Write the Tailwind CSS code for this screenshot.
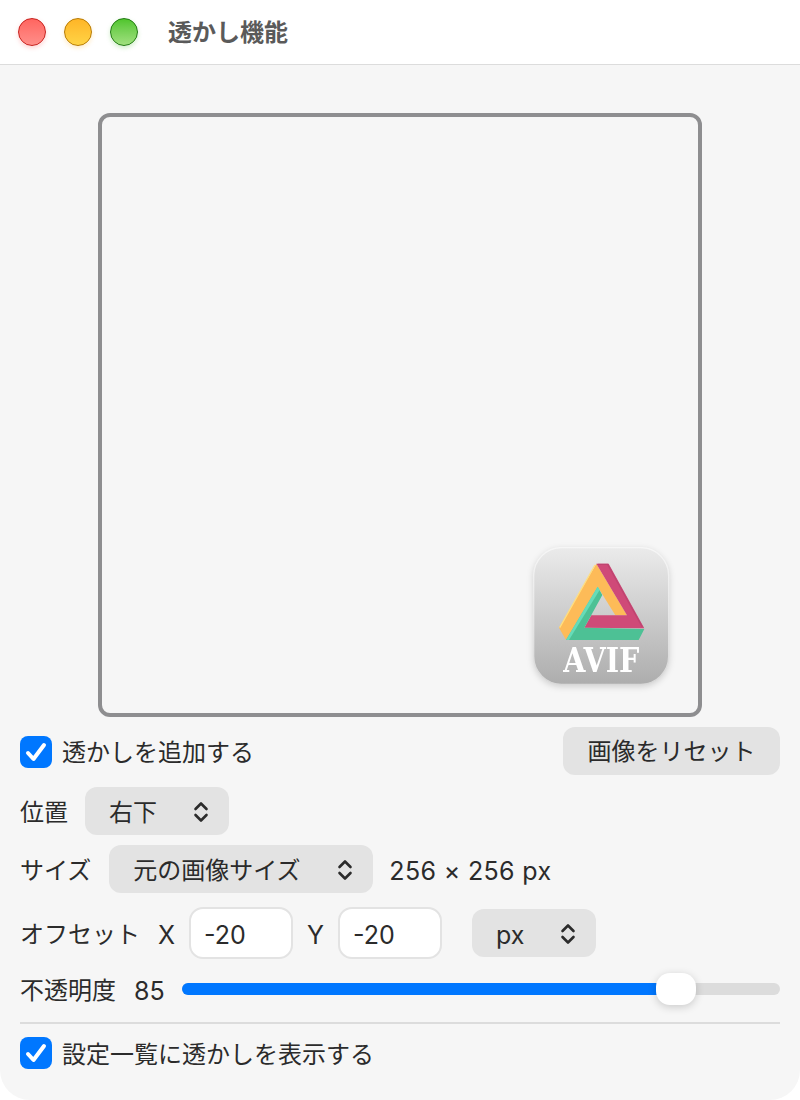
<!DOCTYPE html>
<html lang="ja">

<head>
  <meta charset="utf-8">
  <title>透かし機能</title>
  <script src="https://cdn.jsdelivr.net/npm/@tailwindcss/browser@4"></script>
</head>

<body class="bg-white font-['Inter','Noto_Sans_CJK_JP',sans-serif] text-[24px] leading-[32px] text-[#2b2b2b]">
  <div class="w-[800px] h-[1100px] flex flex-col bg-[#f6f6f6] rounded-b-[30px] overflow-hidden">

    <!-- title bar -->
    <div class="h-[65px] shrink-0 flex items-center pl-[18px] bg-white border-b border-[#dcdcdc]">
      <span class="w-[28px] h-[28px] rounded-full border border-[#c8201c] bg-gradient-to-b from-[#ff6560] to-[#ff8e8a] shadow-[0_2px_4px_rgba(255,90,90,0.25)]"></span>
      <span class="w-[28px] h-[28px] ml-[18px] rounded-full border border-[#b87a00] bg-gradient-to-b from-[#ffb526] to-[#ffd445] shadow-[0_2px_4px_rgba(255,180,40,0.25)]"></span>
      <span class="w-[28px] h-[28px] ml-[18px] rounded-full border border-[#1f7a10] bg-gradient-to-b from-[#4fc52b] to-[#a0e07e] shadow-[0_2px_4px_rgba(80,190,50,0.25)]"></span>
      <span class="ml-[30px] pt-[2px] font-bold text-[#5a5a5a]">透かし機能</span>
    </div>

    <div class="flex-1 flex flex-col px-[20px] pt-[48px]">
      <!-- preview -->
      <div class="self-center w-[604px] h-[604px] shrink-0 flex justify-end items-end pr-[26px] pb-[25px] border-4 border-[#8e8e90] rounded-[12px]">
        <svg class="drop-shadow-[0_2px_3px_rgba(0,0,0,0.15)]" width="139" height="141" viewBox="38 38 417 423">
          <defs>
            <linearGradient id="tile" x1="0" y1="0" x2="0" y2="1">
              <stop offset="0" stop-color="#ebebeb" />
              <stop offset="1" stop-color="#adadad" />
            </linearGradient>
            <linearGradient id="rim" x1="0" y1="0" x2="0" y2="1">
              <stop offset="0" stop-color="#f6f6f6" />
              <stop offset="1" stop-color="#d8d8d8" />
            </linearGradient>
          </defs>
          <rect x="40" y="40" width="405" height="410" rx="84" fill="url(#tile)" stroke="url(#rim)" stroke-width="4" />
          <polygon points="228,88 116,280 137,317 232,157 285,243 320,243" fill="#fdbb58" />
          <polyline points="224,92 118,280" fill="none" stroke="#ffdf80" stroke-width="4" />
          <polygon points="228,88 265,88 372,282 192,280 213,243 320,243" fill="#cf4a78" />
          <polyline points="232,90 262,90 366,278" fill="none" stroke="#bf4470" stroke-width="4" />
          <polygon points="232,157 137,317 355,317 372,284 192,280 246,182" fill="#4dc195" />
          <polygon points="232,157 137,317 146,317 238,167" fill="#66dcb8" />
          <text x="243" y="412" text-anchor="middle" font-family="DejaVu Serif" font-weight="700" font-size="100" textLength="228" lengthAdjust="spacingAndGlyphs" fill="#ffffff">AVIF</text>
        </svg>
      </div>

      <div class="mt-[10px] h-[48px] flex items-center justify-between">
        <label class="flex items-center gap-[10px]">
          <span class="mt-[2px] w-[32px] h-[32px] rounded-[8px] bg-[#0077ff] flex items-center justify-center">
            <svg width="22" height="20" viewBox="0 0 22 20" fill="none" stroke="white" stroke-width="4" stroke-linecap="round" stroke-linejoin="round"><path d="M3 11l5.500 6L19 3" /></svg>
          </span>
          <span class="pt-[4px]">透かしを追加する</span>
        </label>
        <button class="w-[217px] h-[48px] pt-[2px] rounded-[12px] bg-[#e3e3e3]">画像をリセット</button>
      </div>

      <div class="mt-[12px] h-[48px] flex items-center gap-[17px]">
        <span class="pt-[4px]">位置</span>
        <div class="w-[144px] h-[48px] pl-[24px] pr-[20px] flex items-center justify-between rounded-[12px] bg-[#e3e3e3]">
          <span class="pt-[4px]">右下</span>
          <svg class="mt-[2px]" width="16" height="24" viewBox="0 0 16 24" fill="none" stroke="#2b2b2b" stroke-width="2.600" stroke-linecap="round" stroke-linejoin="round"><path d="M2.500 9L8 3.500 13.500 9M2.500 15L8 20.500 13.500 15" /></svg>
        </div>
      </div>

      <div class="mt-[10px] h-[48px] flex items-center">
        <span class="pt-[4px]">サイズ</span>
        <div class="ml-[18px] w-[264px] h-[48px] pl-[24px] pr-[20px] flex items-center justify-between rounded-[12px] bg-[#e3e3e3]">
          <span class="pt-[4px]">元の画像サイズ</span>
          <svg class="mt-[2px]" width="16" height="24" viewBox="0 0 16 24" fill="none" stroke="#2b2b2b" stroke-width="2.600" stroke-linecap="round" stroke-linejoin="round"><path d="M2.500 9L8 3.500 13.500 9M2.500 15L8 20.500 13.500 15" /></svg>
        </div>
        <span class="ml-[16px] pt-[4px] text-[25px] tracking-[0.35px]">256 × 256 px</span>
      </div>

      <div class="mt-[14px] h-[52px] flex items-center">
        <span class="pt-[4px]">オフセット</span>
        <span class="ml-[18px] w-[17px] pt-[4px] text-[25px]">X</span>
        <div class="ml-[14px] w-[104px] h-[52px] pl-[13px] flex items-center rounded-[14px] bg-white border-2 border-[#e3e3e3] text-[25px]"><span class="pt-[4px]">-20</span></div>
        <span class="ml-[14px] w-[17px] pt-[4px] text-[25px]">Y</span>
        <div class="ml-[14px] w-[104px] h-[52px] pl-[13px] flex items-center rounded-[14px] bg-white border-2 border-[#e3e3e3] text-[25px]"><span class="pt-[4px]">-20</span></div>
        <div class="ml-[30px] w-[124px] h-[48px] pl-[24px] pr-[20px] flex items-center justify-between rounded-[12px] bg-[#e3e3e3] text-[25px]">
          <span class="pt-[4px]">px</span>
          <svg class="mt-[2px]" width="16" height="24" viewBox="0 0 16 24" fill="none" stroke="#2b2b2b" stroke-width="2.600" stroke-linecap="round" stroke-linejoin="round"><path d="M2.500 9L8 3.500 13.500 9M2.500 15L8 20.500 13.500 15" /></svg>
        </div>
      </div>

      <div class="mt-[14px] h-[32px] flex items-center">
        <span class="pt-[4px]">不透明度</span>
        <span class="ml-[18px] w-[30px] pt-[4px] text-[25px]">85</span>
        <div class="relative ml-[18px] flex-1 h-[12px] rounded-full bg-[#dcdcdc]">
          <div class="h-[12px] w-[490px] rounded-l-full bg-[#0077ff]"></div>
          <div class="absolute left-[474px] top-[-10px] w-[40px] h-[32px] rounded-[14px] bg-white shadow-[0_2px_8px_rgba(0,0,0,0.18)]"></div>
        </div>
      </div>

      <div class="mt-[17px] h-[2px] bg-[#dcdcdc]"></div>

      <label class="mt-[13px] h-[32px] flex items-center gap-[10px]">
        <span class="w-[32px] h-[32px] rounded-[8px] bg-[#0077ff] flex items-center justify-center">
          <svg width="22" height="20" viewBox="0 0 22 20" fill="none" stroke="white" stroke-width="4" stroke-linecap="round" stroke-linejoin="round"><path d="M3 11l5.500 6L19 3" /></svg>
        </span>
        <span class="pt-[4px]">設定一覧に透かしを表示する</span>
      </label>
    </div>
  </div>
</body>

</html>
